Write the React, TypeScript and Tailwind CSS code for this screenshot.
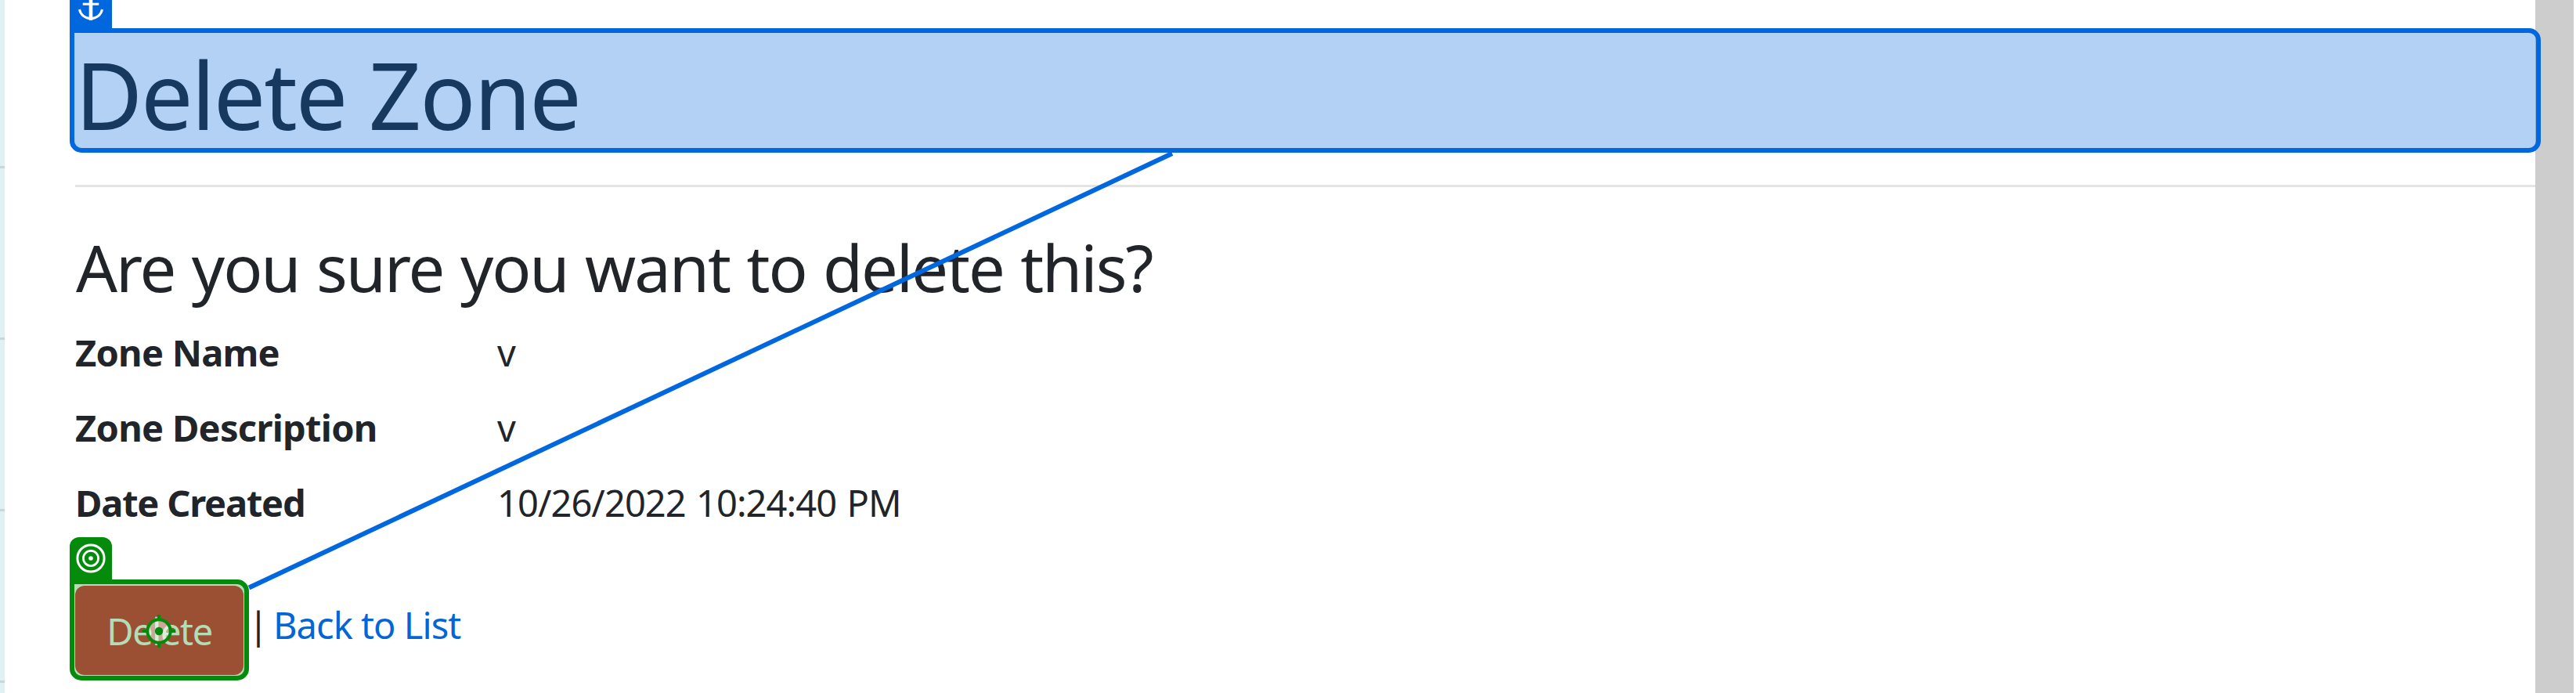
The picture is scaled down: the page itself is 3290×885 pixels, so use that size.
import React from "react";

type Field = { label: string; value: string; labelClass: string };

const fields: Field[] = [
  { label: "Zone Name", value: "v", labelClass: "tracking-[-0.75px]" },
  { label: "Zone Description", value: "v", labelClass: "tracking-[-0.7px]" },
  { label: "Date Created", value: "10/26/2022 10:24:40 PM", labelClass: "tracking-[-1.2px]" },
];

export default function App() {
  return (
    <div className="relative flex h-[885px] w-[3290px] overflow-hidden bg-white font-['Noto_Sans',sans-serif] text-[#212529]">
      <aside className="flex w-[6px] flex-col bg-[#dff2f1] pt-[212px]">
        {[0, 1, 2, 3].map((i) => (
          <div key={i} className="mb-[216px] h-[3px] shrink-0 bg-[#c6d8d7]" />
        ))}
      </aside>
      <main className="flex flex-1 flex-col pl-[90px]">
        <h1 className="mt-[49px] h-[144px] whitespace-nowrap text-[118px] leading-[144px] tracking-[-2.1px]">
          <span>Delete Zone</span>
        </h1>
        <hr className="mt-[43px] h-[3px] border-0 bg-[#e4e4e4]" />
        <h3 className="mt-[51px] h-[100px] whitespace-nowrap pl-px text-[83px] leading-[101px] tracking-[-2.05px] [word-spacing:2px]">
          <span>Are you sure you want to delete this?</span>
        </h3>
        <dl className="mt-[24px] flex flex-col gap-[24px]">
          {fields.map((f) => (
            <div key={f.label} className="flex h-[72px] whitespace-nowrap text-[47px] leading-[72px]">
              <dt className="w-[539px] font-bold">
                <span className={f.labelClass}>{f.label}</span>
              </dt>
              <dd className="tracking-[-0.93px] [word-spacing:2px]">
                <span>{f.value}</span>
              </dd>
            </div>
          ))}
        </dl>
        <div className="mt-[70px] flex items-start whitespace-nowrap text-[47px]">
          <button className="h-[114px] w-[215px] rounded-[12px] bg-[#dc3545] pt-[2px] leading-[112px] tracking-[-1.4px] text-white">
            <span>Delete</span>
          </button>
          <span className="ml-[6px] w-[26px] leading-[101px]">|</span>
          <a className="ml-[6px] leading-[101px] tracking-[-0.95px] text-[#0366d6]">
            <span>Back to List</span>
          </a>
        </div>
      </main>
      <div className="mr-[3px] w-[49px] bg-[#cdcdcd]" />

      <div className="absolute left-[89px] top-[36px] h-[159px] w-[3156px] rounded-[15px] rounded-tl-none border-[6px] border-[#0067df] bg-[#0067df]/30" />
      <div className="absolute left-[89px] top-0 flex h-[36px] w-[54px] bg-[#0067df]">
        <svg width="54" height="36" viewBox="0 0 54 36" fill="none" stroke="#fff">
          <path d="M27 0V26" strokeWidth="4.6" />
          <path d="M16.700 5.200H37.300" strokeWidth="3" />
          <path d="M12.500 12A14.700 14 0 0 0 41.500 12" strokeWidth="3" />
        </svg>
      </div>
      <div className="absolute left-[89px] top-[740px] h-[129px] w-[229px] rounded-[15px] rounded-tl-none border-[6px] border-[#058b0b] bg-[#058b0b]/30" />
      <div className="absolute left-[89px] top-[686px] h-[54px] w-[54px] rounded-t-[12px] bg-[#058b0b]">
        <svg width="54" height="54" viewBox="0 0 54 54" fill="none" stroke="#fff" strokeWidth="3">
          <circle cx="27" cy="27" r="17.100" />
          <circle cx="27" cy="27" r="9.600" strokeWidth="2.700" />
          <circle cx="27" cy="27" r="2.800" fill="#fff" stroke="none" />
        </svg>
      </div>
      <svg className="absolute inset-0" width="3290" height="885" viewBox="0 0 3290 885" fill="none">
        <path d="M318 750.500L1497 196" stroke="#0067df" strokeWidth="6" />
        <circle cx="203" cy="806" r="14.700" fill="#fff" fillOpacity=".5" stroke="#058b0b" strokeWidth="4" />
        <path d="M203 785v6M203 821v6M182 806h6M218 806h6" stroke="#058b0b" strokeWidth="4" />
        <circle cx="203" cy="806" r="5.200" fill="#058b0b" />
      </svg>
    </div>
  );
}
